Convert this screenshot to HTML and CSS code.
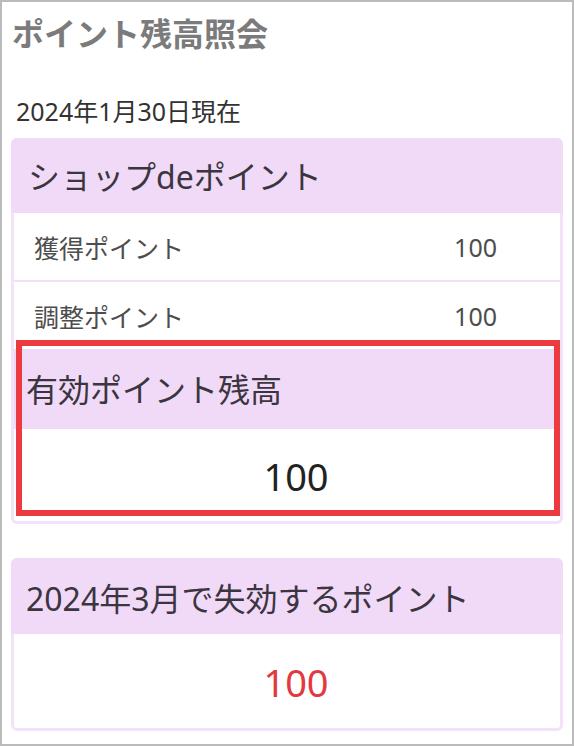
FILE: index.html
```html
<!DOCTYPE html>
<html lang="ja">
<head>
    <meta charset="UTF-8">
    <meta name="viewport" content="width=device-width, initial-scale=1.0">
    <title>ポイント残高照会</title>
    <link rel="stylesheet" href="styles.css">
</head>
<body>
    <div class="screen">
        <h1 class="page-title">ポイント残高照会</h1>
        <p class="as-of">2024年1月30日現在</p>

        <div class="card">
            <div class="card-head">ショップdeポイント</div>
            <ul class="point-list">
                <li>
                    <span class="label">獲得ポイント</span>
                    <span class="num">100</span>
                </li>
                <li>
                    <span class="label">調整ポイント</span>
                    <span class="num">100</span>
                </li>
            </ul>
            <div class="balance marked">
                <div class="balance-head">有効ポイント残高</div>
                <div class="balance-value">100</div>
            </div>
        </div>

        <div class="card expire">
            <div class="card-head">2024年3月で失効するポイント</div>
            <div class="balance-value">100</div>
        </div>
    </div>
</body>
</html>
```

FILE: styles.css
```css
*{
    margin: 0;
    padding: 0;
    box-sizing: border-box;
}
ul{
    list-style: none;
}
body{
    font-family: "Noto Sans", "Noto Sans CJK JP", sans-serif;
    color: #333;
    background: #fff;
}
.screen{
    width: 574px;
    height: 746px;
    border: 2px solid #bbb;
    padding: 0 9px;
}
.page-title{
    margin-top: 12px;
    padding-left: 1px;
    font-size: 32px;
    line-height: 40px;
    font-weight: bold;
    color: #7b7b7b;
}
.as-of{
    margin-top: 41px;
    padding-left: 5px;
    font-size: 25px;
    line-height: 32px;
    color: #333;
}
.card{
    margin-top: 11px;
    border: 3px solid #f3e2f8;
    border-radius: 6px;
}
.card-head{
    margin: -3px -3px 0;
    padding-top: 3px;
    padding-left: 17px;
    height: 75px;
    line-height: 72px;
    background: #f1daf7;
    border-radius: 6px 6px 0 0;
    font-size: 32px;
    color: #3b3540;
}
.point-list li{
    display: flex;
    justify-content: space-between;
    align-items: center;
    height: 67px;
    padding: 0 63px 0 20px;
    font-size: 25px;
    color: #4d4d4d;
}
.point-list li:first-child{
    height: 69px;
    border-bottom: 2px solid #f3e0f8;
}
.balance{
    position: relative;
}
/* 赤枠 */
.marked::after{
    content: "";
    position: absolute;
    left: 2px;
    right: 0;
    top: -9px;
    bottom: 5px;
    border: 6px solid #ec3b40;
}
.balance-head{
    height: 80px;
    line-height: 82px;
    padding-left: 12px;
    background: #f1daf7;
    font-size: 32px;
    color: #3b3540;
}
.balance-value{
    height: 92px;
    line-height: 94px;
    padding-left: 18px;
    text-align: center;
    font-size: 38px;
    color: #222;
}
.expire{
    margin-top: 34px;
}
.expire .card-head{
    height: 76px;
    line-height: 75px;
    padding-left: 15px;
}
.expire .balance-value{
    height: 94px;
    line-height: 96px;
    color: #e2383f;
}
```
